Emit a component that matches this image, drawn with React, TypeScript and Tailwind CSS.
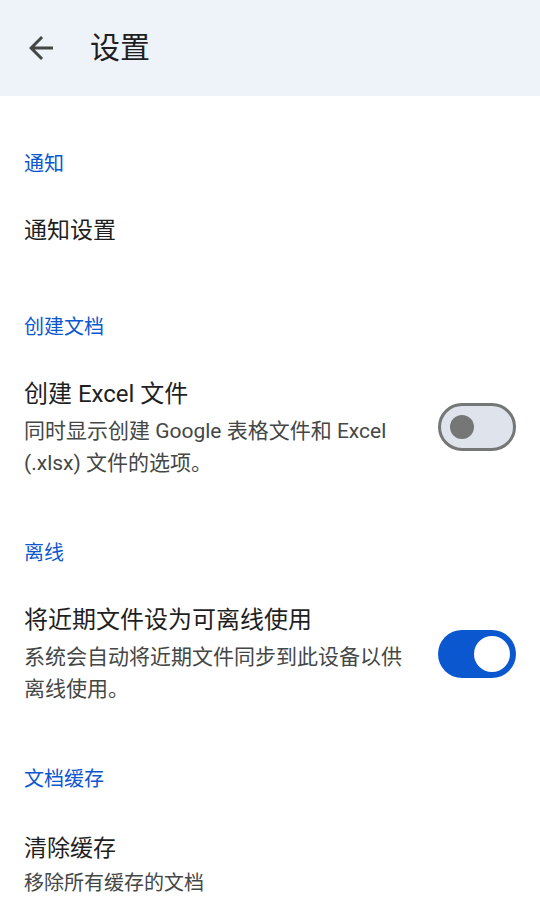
import React from "react";

const font = { fontFamily: 'Roboto, "Noto Sans CJK SC", sans-serif' };

function Toggle({ on }: { on: boolean }) {
  if (on) {
    return (
      <div className="flex h-[48px] w-[78px] shrink-0 items-center justify-end rounded-full bg-[#0b57d0] pr-[6px]">
        <div className="h-[36px] w-[36px] rounded-full bg-white" />
      </div>
    );
  }
  return (
    <div className="flex h-[48px] w-[78px] shrink-0 items-center rounded-full border-[3px] border-[#747775] bg-[#dfe3eb] pl-[9px]">
      <div className="h-[24px] w-[24px] rounded-full bg-[#747775]" />
    </div>
  );
}

function Section({
  title,
  className = "",
  children,
}: {
  title: string;
  className?: string;
  children: React.ReactNode;
}) {
  return (
    <div className={`flex flex-col gap-[37px] ${className}`}>
      <p className="text-[20px] leading-[28px] text-[#0b57d0]">{title}</p>
      {children}
    </div>
  );
}

export default function App() {
  return (
    <div className="min-h-[924px] w-[540px] bg-white" style={font}>
      <div className="flex h-[96px] items-center bg-[#eef2f9] pl-[23px]">
        <svg viewBox="0 0 24 24" className="h-[36px] w-[36px] fill-[#444746]">
          <path d="M20 11H7.83l5.59-5.59L12 4l-8 8 8 8 1.41-1.41L7.83 13H20v-2z" />
        </svg>
        <h1 className="ml-[31px] text-[30px] leading-[36px] text-[#1f1f1f]">设置</h1>
      </div>

      <div className="flex flex-col px-[24px] pt-[54px]">
        <Section title="通知">
          <p className="text-[23px] leading-[32px] text-[#1f1f1f]">通知设置</p>
        </Section>

        <Section title="创建文档" className="mt-[66px]">
          <div className="flex items-center justify-between gap-4">
            <div className="flex max-w-[385px] flex-col gap-[5px]">
              <p className="text-[24px] leading-[32px] text-[#1f1f1f]">创建 Excel 文件</p>
              <p className="text-[21px] leading-[32px] text-[#444746]">
                同时显示创建 Google 表格文件和 Excel (.xlsx) 文件的选项。
              </p>
            </div>
            <div className="-mt-[4px]">
              <Toggle on={false} />
            </div>
          </div>
        </Section>

        <Section title="离线" className="mt-[60px]">
          <div className="flex items-center justify-between gap-4">
            <div className="flex max-w-[385px] flex-col gap-[5px]">
              <p className="text-[24px] leading-[32px] text-[#1f1f1f]">将近期文件设为可离线使用</p>
              <p className="text-[21px] leading-[32px] text-[#444746]">
                系统会自动将近期文件同步到此设备以供离线使用。
              </p>
            </div>
            <div className="-mt-[2px]">
              <Toggle on={true} />
            </div>
          </div>
        </Section>

        <Section title="文档缓存" className="mt-[60px]">
          <div className="mt-[3px] flex flex-col gap-[2px]">
            <p className="text-[23px] leading-[32px] text-[#1f1f1f]">清除缓存</p>
            <p className="text-[20px] leading-[32px] text-[#444746]">移除所有缓存的文档</p>
          </div>
        </Section>
      </div>
    </div>
  );
}
